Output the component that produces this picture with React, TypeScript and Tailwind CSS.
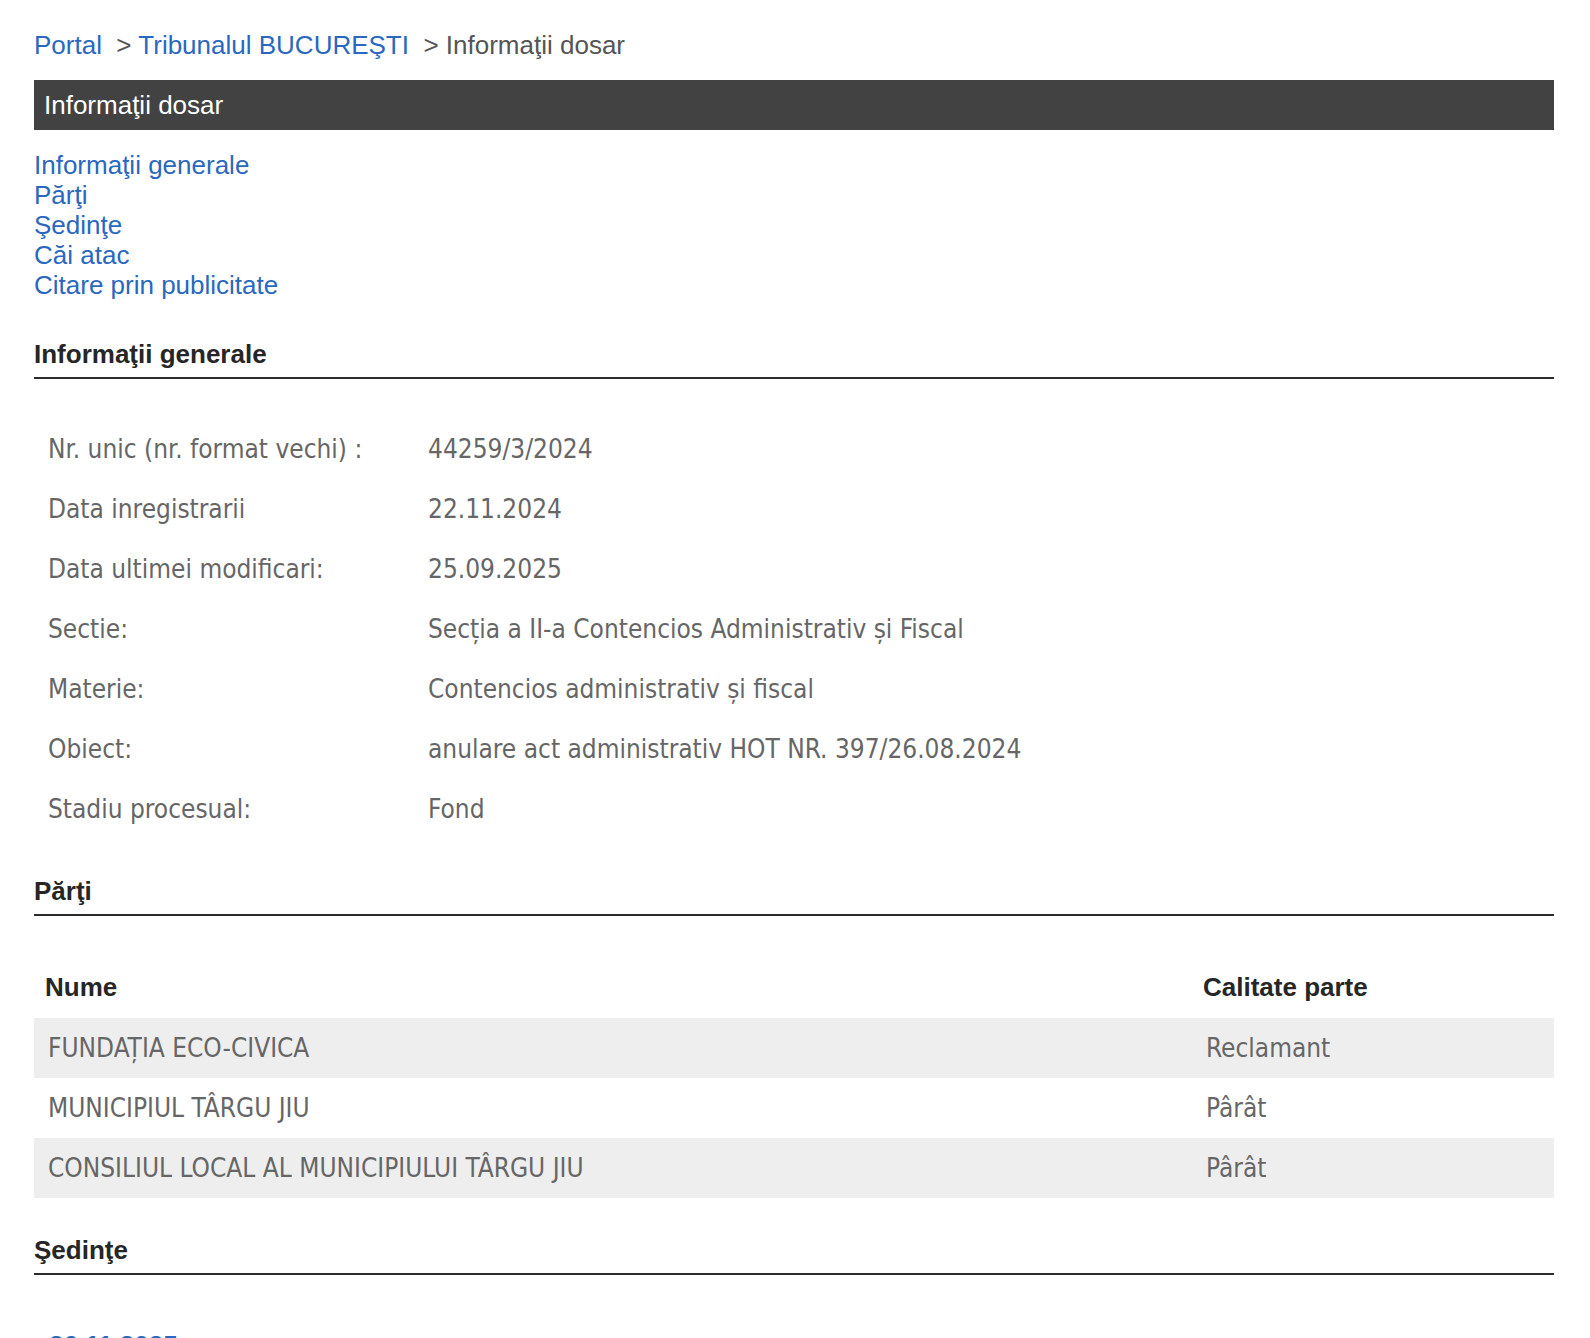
import React from "react";

const info: [string, string][] = [
  ["Nr. unic (nr. format vechi) :", "44259/3/2024"],
  ["Data inregistrarii", "22.11.2024"],
  ["Data ultimei modificari:", "25.09.2025"],
  ["Sectie:", "Secția a II-a Contencios Administrativ și Fiscal"],
  ["Materie:", "Contencios administrativ și fiscal"],
  ["Obiect:", "anulare act administrativ HOT NR. 397/26.08.2024"],
  ["Stadiu procesual:", "Fond"],
];

const parti: [string, string][] = [
  ["FUNDAȚIA ECO-CIVICA", "Reclamant"],
  ["MUNICIPIUL TÂRGU JIU", "Pârât"],
  ["CONSILIUL LOCAL AL MUNICIPIULUI TÂRGU JIU", "Pârât"],
];

function Heading({ children }: { children: React.ReactNode }) {
  return (
    <div className="border-b-2 border-[#2b2b2b] pb-[8px] text-[26px] font-bold leading-[30px] text-[#262626] font-['Liberation_Sans',Arial,sans-serif]">
      {children}
    </div>
  );
}

export default function App() {
  return (
    <div className="h-[1338px] overflow-hidden bg-white pl-[34px] pr-[36px] pt-[30px] font-['Liberation_Sans',Arial,sans-serif] text-[26px]">
      <div className="leading-[30px] text-[#555]">
        <a className="text-[#2a68c0]">Portal</a>
        <span>&nbsp; &gt; </span>
        <a className="text-[#2a68c0]">Tribunalul BUCUREŞTI</a>
        <span>&nbsp; &gt; Informaţii dosar</span>
      </div>

      <div className="mt-[20px] flex h-[50px] items-center bg-[#424242] pl-[10px] text-white">
        Informaţii dosar
      </div>

      <div className="mt-[20px] flex flex-col leading-[30px] text-[#2a68c0]">
        <a>Informaţii generale</a>
        <a>Părţi</a>
        <a>Şedinţe</a>
        <a>Căi atac</a>
        <a>Citare prin publicitate</a>
      </div>

      <div className="mt-[39px]">
        <Heading>Informaţii generale</Heading>
      </div>

      <div className="mt-[40px] flex flex-col font-['DejaVu_Sans_Condensed','DejaVu_Sans',sans-serif] text-[26px] text-[#666]">
        {info.map(([k, v]) => (
          <div key={k} className="flex h-[60px] items-center">
            <div className="w-[394px] shrink-0 pl-[14px]">{k}</div>
            <div>{v}</div>
          </div>
        ))}
      </div>

      <div className="mt-[37px]">
        <Heading>Părţi</Heading>
      </div>

      <div className="mt-[40px]">
        <div className="flex h-[62px] items-center text-[26px] font-bold text-[#262626]">
          <div className="flex-1 pl-[11px]">Nume</div>
          <div className="w-[351px]">Calitate parte</div>
        </div>
        {parti.map(([n, c], i) => (
          <div
            key={n}
            className={
              "flex h-[60px] items-center font-['DejaVu_Sans_Condensed','DejaVu_Sans',sans-serif] text-[26px] text-[#666] " +
              (i % 2 === 0 ? "bg-[#eeeeee]" : "bg-white")
            }
          >
            <div className="flex-1 pl-[14px]">{n}</div>
            <div className="w-[351px] pl-[3px]">{c}</div>
          </div>
        ))}
      </div>

      <div className="mt-[37px]">
        <Heading>Şedinţe</Heading>
      </div>

      <div className="mt-[55px] pl-[15px] leading-[30px] text-[#2a68c0]">
        <a className="font-bold">26.11.2025</a>
      </div>
    </div>
  );
}
